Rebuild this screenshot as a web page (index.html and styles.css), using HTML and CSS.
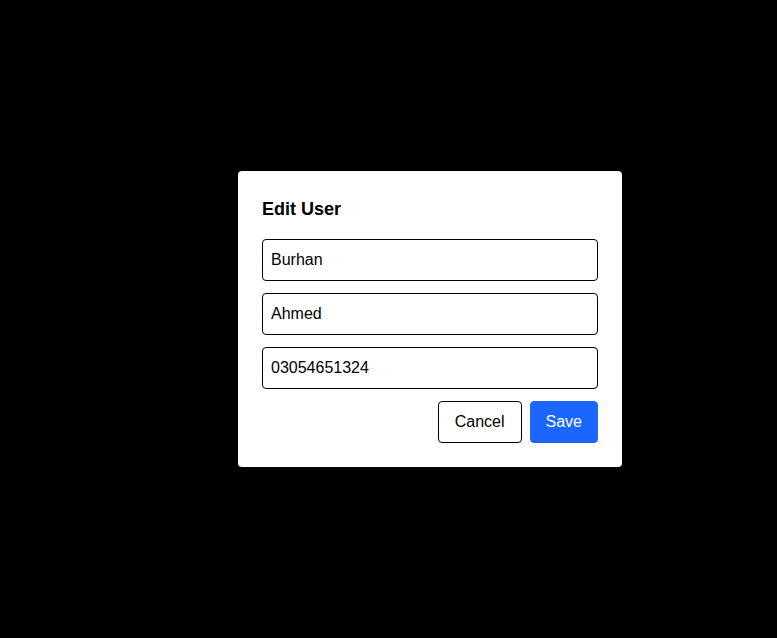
FILE: index.html
```html
<!DOCTYPE html>
<html lang="en">
<head>
<meta charset="utf-8">
<title>Edit User</title>
<link rel="stylesheet" href="styles.css">
</head>
<body>
<div class="overlay">
  <div class="modal">
    <h3 class="title">Edit User</h3>
    <div class="fields">
      <input class="field" type="text" value="Burhan">
      <input class="field" type="text" value="Ahmed">
      <input class="field" type="text" value="03054651324">
    </div>
    <div class="actions">
      <button class="btn btn-cancel" type="button">Cancel</button>
      <button class="btn btn-save" type="button">Save</button>
    </div>
  </div>
</div>
</body>
</html>
```

FILE: styles.css
```css
html, body {
  margin: 0;
  padding: 0;
  background: #000;
  font-family: "Liberation Sans", Arial, sans-serif;
}
.overlay {
  width: 777px;
  height: 638px;
  display: flex;
  justify-content: center;
  align-items: center;
  padding-left: 83px;
  box-sizing: border-box;
}
.modal {
  width: 384px;
  box-sizing: border-box;
  background: #fff;
  border-radius: 4px;
  padding: 24px;
  display: flex;
  flex-direction: column;
}
.title {
  margin: 0 0 16px 0;
  font-size: 18px;
  font-weight: bold;
  line-height: 28px;
  color: #000;
}
.fields {
  display: flex;
  flex-direction: column;
  gap: 12px;
}
.field {
  height: 42px;
  box-sizing: border-box;
  border: 1px solid #000;
  border-radius: 4px;
  padding: 0 8px;
  font-family: "Liberation Sans", Arial, sans-serif;
  font-size: 16px;
  color: #000;
  background: #fff;
  outline: none;
  margin: 0;
}
.actions {
  display: flex;
  justify-content: flex-end;
  gap: 8px;
  margin-top: 12px;
}
.btn {
  height: 42px;
  box-sizing: border-box;
  border-radius: 4px;
  font-family: "Liberation Sans", Arial, sans-serif;
  font-size: 16px;
  padding: 0 16px;
  margin: 0;
}
.btn-cancel {
  background: #fff;
  border: 1px solid #000;
  color: #000;
}
.btn-save {
  background: #1a66ff;
  border: 1px solid #1a66ff;
  color: #fff;
  padding: 0 15px;
}
```
